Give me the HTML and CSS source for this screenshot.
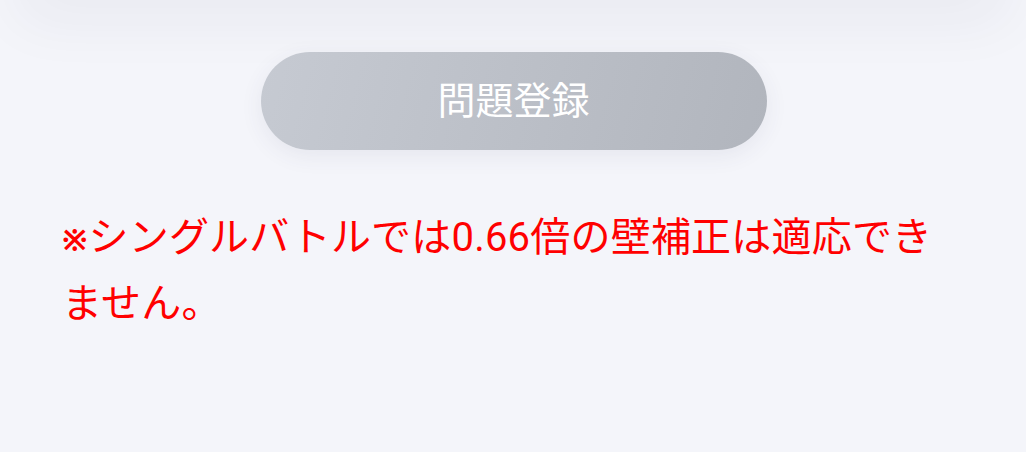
FILE: index.html
```html
<!DOCTYPE html>
<html lang="ja">
<head>
<meta charset="utf-8">
<link rel="stylesheet" href="styles.css">
</head>
<body>
<div class="top-shade"></div>
<main class="panel">
  <div class="actions">
    <button class="register-btn" type="button">問題登録</button>
  </div>
  <p class="notice"><span class="mark">※</span>シングルバトルでは0.66倍の壁補正は適応できません。</p>
</main>
</body>
</html>
```

FILE: styles.css
```css
html, body {
  margin: 0;
  padding: 0;
}
body {
  width: 1026px;
  height: 452px;
  overflow: hidden;
  background: #f4f5fa;
  font-family: Roboto, "Noto Sans", "Noto Sans CJK JP", sans-serif;
}
.top-shade {
  height: 30px;
  margin-top: -30px;
  margin-left: 40px;
  margin-right: 40px;
  box-shadow: 0 0 60px 20px rgba(40, 45, 80, 0.055);
}
.panel {
  padding: 52px 62px 0 62px;
}
.actions {
  display: flex;
  justify-content: center;
  padding-left: 1px;
}
.register-btn {
  width: 506px;
  height: 98px;
  border: none;
  border-radius: 49px;
  background: linear-gradient(105deg, #c6cad2 0%, #b1b5bd 100%);
  box-shadow: 0 6px 22px rgba(60, 70, 100, 0.08);
  color: #ffffff;
  font-family: "Noto Sans CJK JP", sans-serif;
  font-size: 38px;
  line-height: 1;
  padding: 0 0 6px 0;
}
.notice {
  margin: 56px 0 0 0;
  color: #ff0000;
  font-size: 40px;
  line-height: 64px;
  letter-spacing: 0.2px;
}
.mark {
  font-family: "Noto Sans", sans-serif;
  font-weight: 700;
  font-size: 30px;
  letter-spacing: 0;
  margin-right: 1px;
}
```
